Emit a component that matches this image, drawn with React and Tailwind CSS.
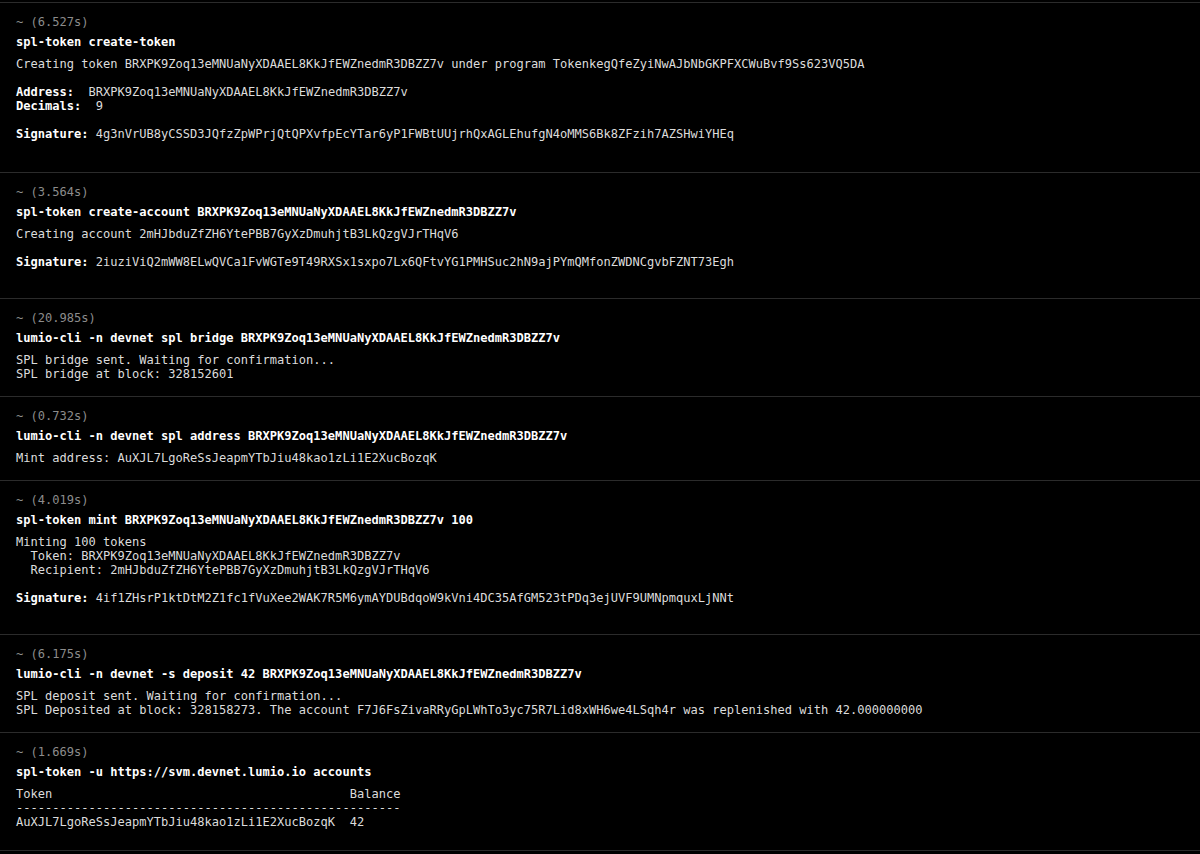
import React from 'react';

const ADDR = 'BRXPK9Zoq13eMNUaNyXDAAEL8KkJfEWZnedmR3DBZZ7v';
const OWNER = '2mHJbduZfZH6YtePBB7GyXzDmuhjtB3LkQzgVJrTHqV6';
const MINT = 'AuXJL7LgoReSsJeapmYTbJiu48kao1zLi1E2XucBozqK';

// each output line is either a plain string or [boldLabel, rest]
const blocks = [
  {
    time: '6.527s',
    cmd: 'spl-token create-token',
    out: [
      `Creating token ${ADDR} under program TokenkegQfeZyiNwAJbNbGKPFXCWuBvf9Ss623VQ5DA`,
      '',
      ['Address:', `  ${ADDR}`],
      ['Decimals:', '  9'],
      '',
      ['Signature:', ' 4g3nVrUB8yCSSD3JQfzZpWPrjQtQPXvfpEcYTar6yP1FWBtUUjrhQxAGLEhufgN4oMMS6Bk8ZFzih7AZSHwiYHEq'],
      '',
    ],
    pad: 'pb-[17px]',
  },
  {
    time: '3.564s',
    cmd: `spl-token create-account ${ADDR}`,
    out: [
      `Creating account ${OWNER}`,
      '',
      ['Signature:', ' 2iuziViQ2mWW8ELwQVCa1FvWGTe9T49RXSx1sxpo7Lx6QFtvYG1PMHSuc2hN9ajPYmQMfonZWDNCgvbFZNT73Egh'],
      '',
    ],
  },
  {
    time: '20.985s',
    cmd: `lumio-cli -n devnet spl bridge ${ADDR}`,
    out: ['SPL bridge sent. Waiting for confirmation...', 'SPL bridge at block: 328152601'],
  },
  {
    time: '0.732s',
    cmd: `lumio-cli -n devnet spl address ${ADDR}`,
    out: [`Mint address: ${MINT}`],
  },
  {
    time: '4.019s',
    cmd: `spl-token mint ${ADDR} 100`,
    out: [
      'Minting 100 tokens',
      `  Token: ${ADDR}`,
      `  Recipient: ${OWNER}`,
      '',
      ['Signature:', ' 4if1ZHsrP1ktDtM2Z1fc1fVuXee2WAK7R5M6ymAYDUBdqoW9kVni4DC35AfGM523tPDq3ejUVF9UMNpmquxLjNNt'],
      '',
    ],
  },
  {
    time: '6.175s',
    cmd: `lumio-cli -n devnet -s deposit 42 ${ADDR}`,
    out: [
      'SPL deposit sent. Waiting for confirmation...',
      'SPL Deposited at block: 328158273. The account F7J6FsZivaRRyGpLWhTo3yc75R7Lid8xWH6we4LSqh4r was replenished with 42.000000000',
    ],
  },
  {
    time: '1.669s',
    cmd: 'spl-token -u https://svm.devnet.lumio.io accounts',
    out: [
      'Token                                         Balance',
      '-----------------------------------------------------',
      `${MINT}  42`,
    ],
    pad: 'pb-[21px]',
  },
];

const Line = ({ line }) => {
  if (Array.isArray(line)) {
    return (
      <div className="h-[14px]">
        <span className="font-bold text-white">{line[0]}</span>
        {line[1]}
      </div>
    );
  }
  return <div className="h-[14px]">{line || ' '}</div>;
};

const Block = ({ time, cmd, out, pad }) => (
  <div className={`border-t border-[#2b2b2b] px-4 pt-[12px] ${pad || 'pb-[15px]'}`}>
    <div className="text-[#8c8c8c]">~ ({time})</div>
    <div className="mt-[6px] font-bold text-white">{cmd}</div>
    <div className="mt-[8px] text-[#dcdcdc]">
      {out.map((l, i) => (
        <Line key={i} line={l} />
      ))}
    </div>
  </div>
);

export default function App() {
  return (
    <div
      className="min-h-screen bg-black pt-[2px] text-[12.05px] leading-[14px] whitespace-pre"
      style={{ fontFamily: '"DejaVu Sans Mono", "Liberation Mono", monospace' }}
    >
      {blocks.map((b) => (
        <Block key={b.time} {...b} />
      ))}
      <div className="border-t border-[#2b2b2b]" />
    </div>
  );
}
